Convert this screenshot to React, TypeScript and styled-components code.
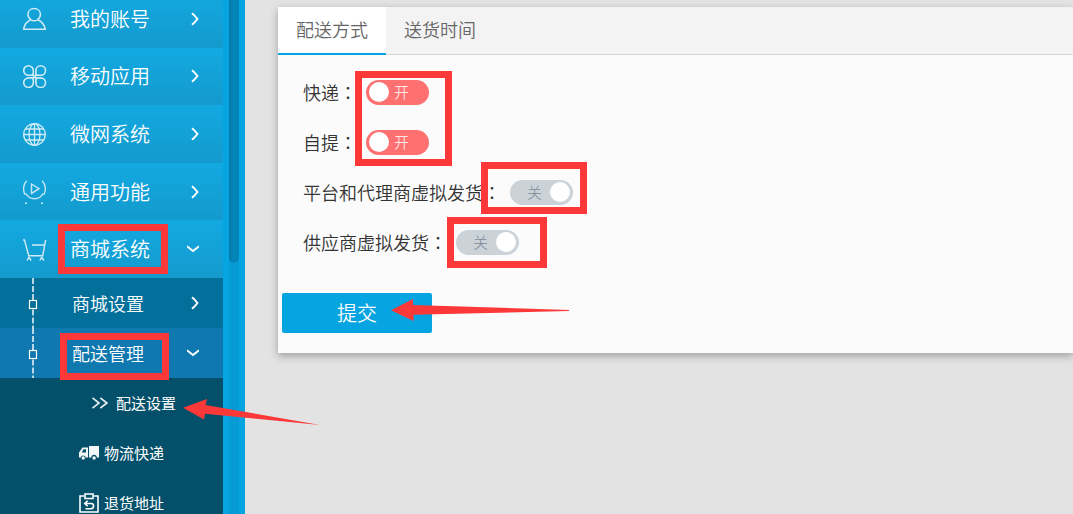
import React, { useState } from "react";
import styled, { createGlobalStyle, css } from "styled-components";

const GlobalStyle = createGlobalStyle`
  *, *::before, *::after { box-sizing: border-box; }
  html, body { margin: 0; }
  body {
    background: #e3e3e3;
    overflow: hidden;
    font-family: "Noto Sans CJK SC", "Noto Sans", sans-serif;
    font-weight: 350;
  }
  button, input { font-family: inherit; font-weight: inherit; }
`;

const Page = styled.div`
  display: flex;
  position: relative;
  height: 100vh;
  overflow: hidden;
`;

const Sidebar = styled.aside`
  display: flex;
  flex: none;
  width: 245px;
  background: #06a4e0;
  overflow: hidden;
`;

const Menu = styled.nav`
  flex: none;
  width: 223px;
  background: #04506b;
`;

const ScrollTrack = styled.div`
  width: 10px;
  margin-left: 6px;
  background: #069bd4;
`;

const ScrollThumb = styled.div`
  height: 263px;
  border-radius: 0 0 5px 5px;
  background: linear-gradient(90deg, #0379a8, #0285b7 40%, #0285b7);
`;

const MainGroup = styled.div`
  display: grid;
  grid-template-rows: repeat(5, 1fr);
  height: 288px;
  margin-top: -10px;
`;

const itemBase = css`
  display: flex;
  align-items: center;
  color: #fff;
  text-decoration: none;
  white-space: nowrap;
`;

const MainItem = styled.a`
  ${itemBase}
  padding: 0 24px 0 23px;
  gap: 23px;
  font-size: 20px;
  line-height: 30px;
  background: linear-gradient(#12a9e1, #149acd);
`;

const SubItem = styled.a<{ $active?: boolean }>`
  ${itemBase}
  height: 50px;
  padding: 0 24px 0 28px;
  gap: 34px;
  font-size: 18px;
  line-height: 26px;
  background: ${(p) => (p.$active ? "#0f78ae" : "#02709b")};
`;

const LeafItem = styled.a<{ $current?: boolean }>`
  ${itemBase}
  height: 50px;
  padding-left: ${(p) => (p.$current ? 92 : 79)}px;
  gap: ${(p) => (p.$current ? 8 : 5)}px;
  font-size: 15px;
  font-weight: 400;
  line-height: 22px;
`;

const ItemLabel = styled.span`
  flex: 1;
`;

const Icon = styled.svg`
  display: block;
  flex: none;
  fill: none;
  stroke: #fff;
`;

const Main = styled.main`
  flex: 1;
  min-width: 0;
  padding: 7px 0 0 33px;
`;

const Panel = styled.section`
  background: #fbfbfb;
  box-shadow: 0 3px 8px rgba(0, 0, 0, 0.3);
`;

const Tabs = styled.div`
  display: flex;
  height: 48px;
  background: #f3f3f3;
  border-bottom: 1px solid #d6d6d6;
`;

const Tab = styled.button<{ $active?: boolean }>`
  height: 48px;
  padding: 0 18px 2px;
  border: 0;
  border-bottom: 2px solid ${(p) => (p.$active ? "#06a4e0" : "transparent")};
  background: ${(p) => (p.$active ? "#fff" : "transparent")};
  color: #666;
  font-size: 18px;
  line-height: 26px;
`;

const Form = styled.form`
  padding: 12px 4px 20px;
`;

const Field = styled.div`
  display: flex;
  align-items: center;
  gap: 9px;
  height: 50px;
  padding-left: 21px;
`;

const FieldLabel = styled.label`
  color: #333;
  font-size: 18px;
  line-height: 26px;
  white-space: nowrap;

  &::after {
    content: "：";
    font-family: "Noto Sans CJK TC", sans-serif;
  }
`;

const Toggle = styled.span`
  display: block;
  position: relative;
  width: 63px;
  height: 25px;
`;

const ToggleInput = styled.input`
  appearance: none;
  display: flex;
  align-items: center;
  justify-content: flex-end;
  width: 100%;
  height: 100%;
  margin: 0;
  padding: 0 3px;
  border-radius: 13px;
  background: #cbd2d8;

  &::before {
    content: "";
    width: 20px;
    height: 20px;
    border-radius: 50%;
    background: #fff;
  }

  &:checked {
    justify-content: flex-start;
    background: #ff7070;
  }
`;

const ToggleText = styled.span<{ $on: boolean }>`
  position: absolute;
  top: 2px;
  left: ${(p) => (p.$on ? 28 : 17)}px;
  color: ${(p) => (p.$on ? "#fff" : "#7d8a95")};
  font-size: 15px;
  font-weight: 300;
  line-height: 20px;
  pointer-events: none;
`;

const Submit = styled.button`
  display: block;
  width: 150px;
  height: 40px;
  margin-top: 26px;
  padding: 0;
  border: 0;
  border-radius: 2px;
  background: #06a4e0;
  color: #fff;
  font-size: 20px;
  line-height: 30px;
`;

const Marker = styled.div<{ $x: number; $y: number; $w: number; $h: number }>`
  position: absolute;
  left: ${(p) => p.$x}px;
  top: ${(p) => p.$y}px;
  width: ${(p) => p.$w}px;
  height: ${(p) => p.$h}px;
  border: 7px solid #fc3838;
  pointer-events: none;
`;

const Arrow = styled.svg<{ $x: number; $y: number }>`
  position: absolute;
  left: ${(p) => p.$x}px;
  top: ${(p) => p.$y}px;
  fill: #fc3838;
  pointer-events: none;
`;

const UserIcon = () => (
  <Icon width="24" height="24" viewBox="0 0 24 24" strokeWidth="1.5" opacity="0.8">
    <path d="M8 12.6C6 11.4 5 9.6 5 7.4C5 4 7.6 1.6 11.2 1.6s6.2 2.4 6.2 5.8c0 2.2-1 4-3 5.2" />
    <path d="M8 12.8C4 14.6 1.2 18 .6 22.2H22.2C21.6 18 18.6 14.6 14.6 12.8M8 12.8c2 1.2 4.6 1.2 6.6 0" />
  </Icon>
);

const CloverIcon = () => (
  <Icon width="24" height="24" viewBox="0 0 24 24" strokeWidth="1.6" opacity="0.8">
    <path d="M10.3 11.3H5.6a4.8 4.8 0 1 1 4.7-4.8zM12.9 11.3V6.5a4.8 4.8 0 1 1 4.8 4.8zM10.3 13.9V18.700a4.8 4.8 0 1 1-4.7-4.8zM12.9 13.900H17.700a4.8 4.8 0 1 1-4.8 4.8z" />
    <path d="M9 10l5.200 5.200M14.200 10l-5.200 5.200" />
  </Icon>
);

const GlobeIcon = () => (
  <Icon width="24" height="24" viewBox="0 0 24 24" strokeWidth="1.3" opacity="0.8">
    <circle cx="11.5" cy="12.5" r="10.8" />
    <ellipse cx="11.5" cy="12.5" rx="5.5" ry="10.8" />
    <path d="M11.5 1.500v22M.5 12.500h22M2.500 7h18M2.500 18h18" />
  </Icon>
);

const PlayIcon = () => (
  <Icon width="24" height="24" viewBox="0 0 24 24" strokeWidth="1.4" opacity="0.75">
    <path d="M3.800.8C-.2 4.500-.2 11 2.200 14.800M3 13.500c3.500 7 13.500 7 17 0M19 .8c4.200 4 4.200 10.200 1.600 14" />
    <path d="M8.500 4v9.400L16 8.700z" />
    <path d="M2 23.200h2M18 23.200h2" />
  </Icon>
);

const CartIcon = () => (
  <Icon width="24" height="24" viewBox="0 0 24 24" strokeWidth="1.4" opacity="0.8">
    <path d="M0 3h1.500L5.700 18.700H19.700L22.700 3M9 8H21.500" />
    <path d="M4 23.500l2-3.200 2.200 3.200M16.800 23.500l2-3.200 2.200 3.200" />
  </Icon>
);

const ChevronRight = () => (
  <Icon width="8" height="14" viewBox="0 0 8 14" strokeWidth="1.900">
    <path d="M1 1.200L3.600 3.600L6.400 7L3.600 10.400L1 12.800" />
  </Icon>
);

const ChevronDown = () => (
  <Icon width="12" height="8" viewBox="0 0 12 8" strokeWidth="1.8">
    <path d="M0 1.3L6 6L12 1.3" />
  </Icon>
);

const TreeNode = () => (
  <Icon width="10" height="50" viewBox="0 0 10 50">
    <path d="M5 0V22M5 31.5V50" strokeWidth="2" strokeDasharray="6 2" opacity="0.7" />
    <rect x="1.5" y="22.5" width="7" height="8" strokeWidth="1.2" />
  </Icon>
);

const DoubleChevron = () => (
  <Icon width="16" height="12" viewBox="0 0 16 12" strokeWidth="1.7" opacity="0.9">
    <path d="M.5.8L7 6L.5 11.2M8.3.8L14.8 6L8.3 11.2" />
  </Icon>
);

const TruckIcon = () => (
  <Icon width="20" height="14" viewBox="0 0 20 14" opacity="0.95">
    <path d="M10 0h10v11.500h-2.200a2.700 2.700 0 0 0-5.400 0H10z" fill="#fff" stroke="none" />
    <path
      d="M3.500 1.500H9V11.500H6.800a2.700 2.700 0 0 0-5.200 0H0V6.500zM4.400 3.300L2.800 6.500H7V3.300z"
      fill="#fff"
      fillRule="evenodd"
      stroke="none"
    />
    <circle cx="4.2" cy="12" r="1.700" fill="#fff" stroke="none" />
    <circle cx="15.100" cy="12" r="1.700" fill="#fff" stroke="none" />
  </Icon>
);

const ReturnIcon = () => (
  <Icon width="20" height="20" viewBox="0 0 20 20" strokeWidth="1.6">
    <path d="M5 3H1v16h18V3h-4" />
    <path d="M6 1h8v4.5H6z" />
    <path d="M6 10.500h6a2.600 2.600 0 0 1 0 5.200H6.500M8.600 7.800L5.800 10.500l2.800 2.600" />
  </Icon>
);

const mainItems = [
  { label: "我的账号", icon: <UserIcon /> },
  { label: "移动应用", icon: <CloverIcon /> },
  { label: "微网系统", icon: <GlobeIcon /> },
  { label: "通用功能", icon: <PlayIcon /> },
  { label: "商城系统", icon: <CartIcon />, open: true },
];

const options = [
  { id: "express", label: "快递", on: true },
  { id: "pickup", label: "自提", on: true },
  { id: "agent", label: "平台和代理商虚拟发货", on: false },
  { id: "supplier", label: "供应商虚拟发货", on: false },
];

function Switch({ id, initial }: { id: string; initial: boolean }) {
  const [on, setOn] = useState(initial);
  return (
    <Toggle>
      <ToggleInput id={id} type="checkbox" checked={on} onChange={() => setOn(!on)} />
      <ToggleText $on={on}>{on ? "开" : "关"}</ToggleText>
    </Toggle>
  );
}

export default function App() {
  return (
    <>
      <GlobalStyle />
      <Page>
        <Sidebar>
          <Menu>
            <MainGroup>
              {mainItems.map((item) => (
                <MainItem href="#" key={item.label}>
                  {item.icon}
                  <ItemLabel>{item.label}</ItemLabel>
                  {item.open ? <ChevronDown /> : <ChevronRight />}
                </MainItem>
              ))}
            </MainGroup>
            <SubItem href="#">
              <TreeNode />
              <ItemLabel>商城设置</ItemLabel>
              <ChevronRight />
            </SubItem>
            <SubItem href="#" $active>
              <TreeNode />
              <ItemLabel>配送管理</ItemLabel>
              <ChevronDown />
            </SubItem>
            <LeafItem href="#" $current>
              <DoubleChevron />
              配送设置
            </LeafItem>
            <LeafItem href="#">
              <TruckIcon />
              物流快递
            </LeafItem>
            <LeafItem href="#">
              <ReturnIcon />
              退货地址
            </LeafItem>
          </Menu>
          <ScrollTrack>
            <ScrollThumb />
          </ScrollTrack>
        </Sidebar>
        <Main>
          <Panel>
            <Tabs>
              <Tab type="button" $active>配送方式</Tab>
              <Tab type="button">送货时间</Tab>
            </Tabs>
            <Form onSubmit={(e) => e.preventDefault()}>
              {options.map((o) => (
                <Field key={o.id}>
                  <FieldLabel htmlFor={o.id}>{o.label}</FieldLabel>
                  <Switch id={o.id} initial={o.on} />
                </Field>
              ))}
              <Submit type="submit">提交</Submit>
            </Form>
          </Panel>
        </Main>
        <Marker $x={58} $y={224} $w={110} $h={50} />
        <Marker $x={60} $y={333} $w={109} $h={47} />
        <Marker $x={355} $y={71} $w={97} $h={95} />
        <Marker $x={481} $y={162} $w={106} $h={52} />
        <Marker $x={447} $y={217} $w={100} $h={51} />
        <Arrow $x={183} $y={399} width="137" height="27" viewBox="0 0 137 27">
          <path d="M0 8.7L24 0L22.5 6L137 26L22 14.7L21 20.5z" />
        </Arrow>
        <Arrow $x={391} $y={299} width="179" height="22" viewBox="0 0 179 22">
          <path d="M0 11.2L22 0V6L178 11V12L22.6 15.8V22z" />
        </Arrow>
      </Page>
    </>
  );
}
